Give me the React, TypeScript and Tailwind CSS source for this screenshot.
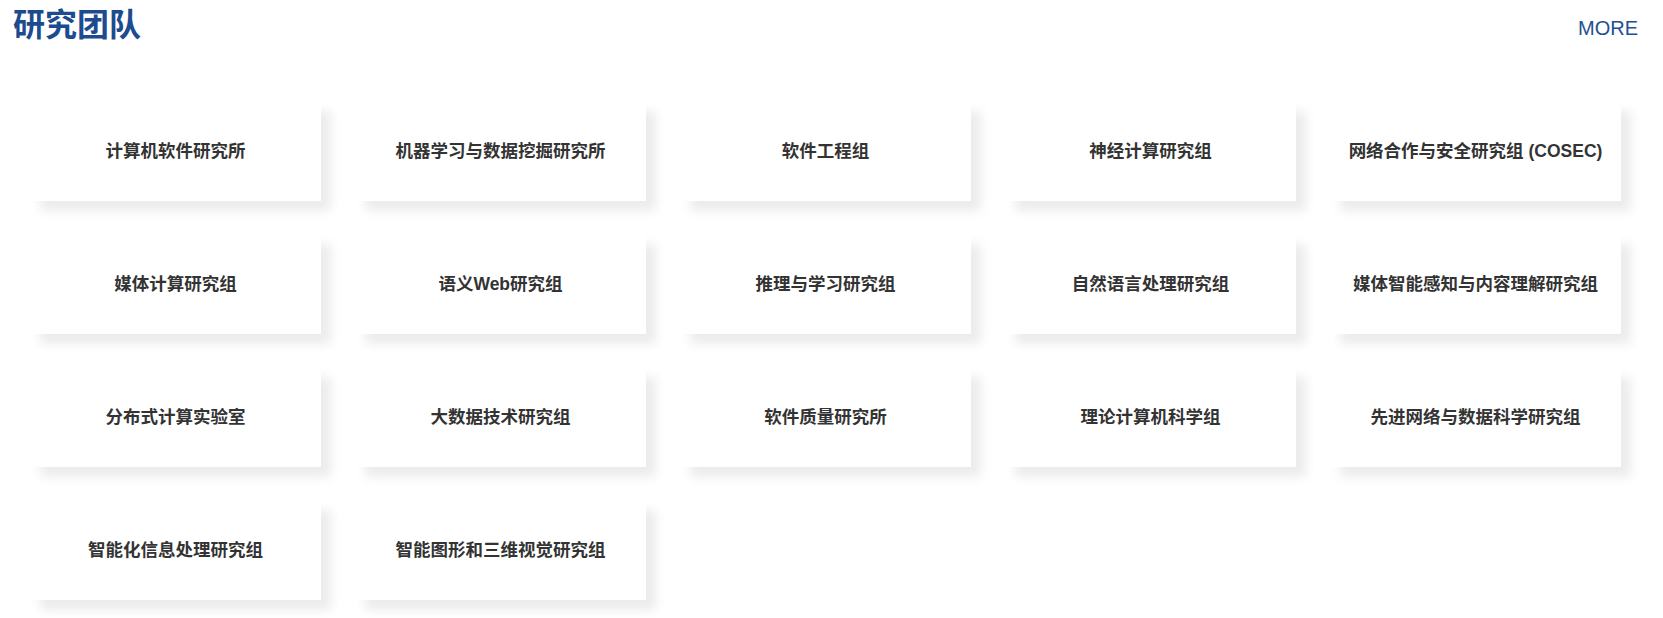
const groups = [
  "计算机软件研究所",
  "机器学习与数据挖掘研究所",
  "软件工程组",
  "神经计算研究组",
  "网络合作与安全研究组 (COSEC)",
  "媒体计算研究组",
  "语义Web研究组",
  "推理与学习研究组",
  "自然语言处理研究组",
  "媒体智能感知与内容理解研究组",
  "分布式计算实验室",
  "大数据技术研究组",
  "软件质量研究所",
  "理论计算机科学组",
  "先进网络与数据科学研究组",
  "智能化信息处理研究组",
  "智能图形和三维视觉研究组",
];

const App = () => {
  return (
    <div className="min-h-[618px] bg-white font-['Liberation_Sans','Noto_Sans_CJK_SC',sans-serif]">
      <div className="ml-[13px] w-[1625px]">
        <div className="flex h-[50px] items-center justify-between">
          <h2 className="text-[32px] font-bold leading-[36px] text-[#1d4b8f]">研究团队</h2>
          <a href="#" className="mt-[5px] text-[20px] leading-[24px] text-[#24508f]">
            MORE
          </a>
        </div>

        <ul className="mt-[51px] grid grid-cols-5 gap-y-[33px]">
          {groups.map((name) => (
            <li key={name} className="px-[17px]">
              <div className="flex h-[100px] items-center justify-center bg-white shadow-[10px_10px_10px_rgba(0,0,0,0.08)]">
                <span className="text-[17.5px] font-bold text-[#333]">{name}</span>
              </div>
            </li>
          ))}
        </ul>
      </div>
    </div>
  );
};

export default App;
